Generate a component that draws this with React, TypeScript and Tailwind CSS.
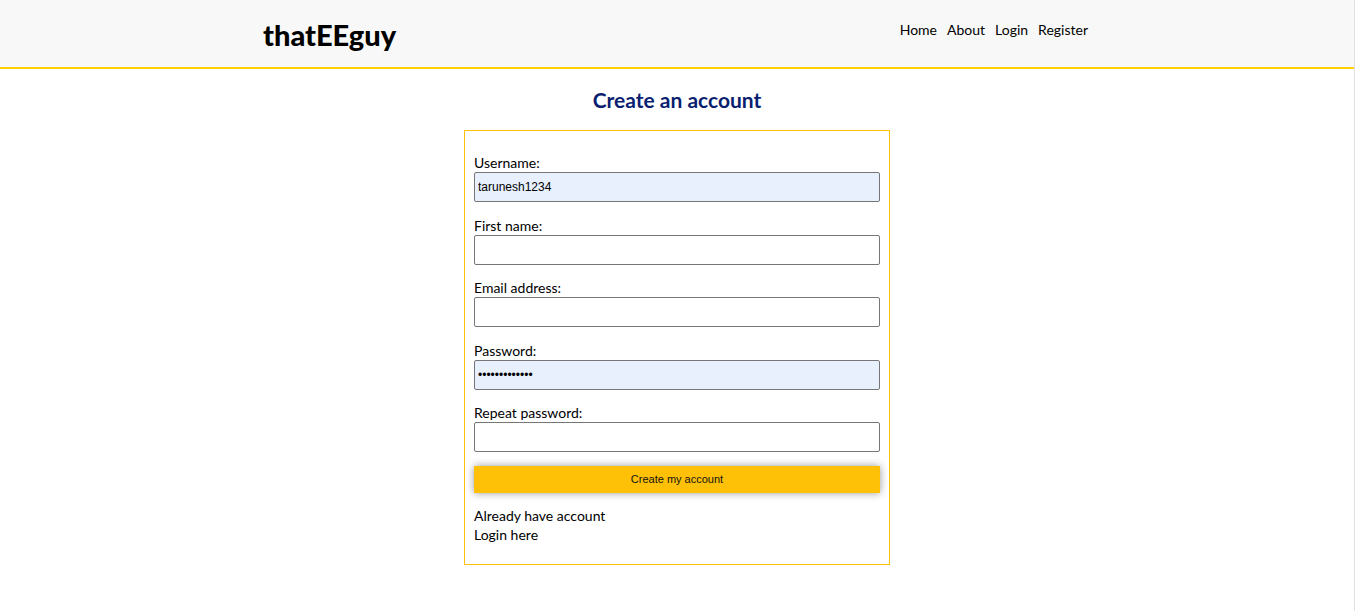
import React from "react";

const sans = "font-['Lato','Noto_Sans',sans-serif]";

function Field({ label, value, type = "text", filled = false }: { label: string; value?: string; type?: string; filled?: boolean }) {
  return (
    <div className="mb-[13.5px] flex flex-col">
      <label className="text-[14px] leading-[19px] text-black">{label}</label>
      <input
        type={type}
        defaultValue={value}
        readOnly
        className={`h-[30px] w-full border border-[#767676] rounded-[2px] px-[3px] font-['Liberation_Sans',Arial,sans-serif] text-[12px] text-black outline-none ${filled ? "bg-[#e8f0fe]" : "bg-white"}`}
      />
    </div>
  );
}

export default function App() {
  return (
    <div className={`${sans} min-h-[611px] bg-white border-r border-[#e0e0e0]`}>
      <header className="h-[69px] bg-[#f8f8f8] border-b-2 border-[#ffd000]">
        <div className="mx-auto flex h-full w-[830px] items-center justify-between pl-[1px] pr-[4px]">
          <div className="text-[29px] font-black leading-none text-black pt-[1px]">thatEEguy</div>
          <nav className="flex gap-[10px] text-[14px] text-black -mt-[9px]">
            <a>Home</a>
            <a>About</a>
            <a>Login</a>
            <a>Register</a>
          </nav>
        </div>
      </header>
      <main className="flex flex-col items-center">
        <h1 className="mt-[17px] text-[21px] font-bold leading-[28px] text-[#0b1f70]">Create an account</h1>
        <div className="mt-[16px] w-[426px] border border-[#ffc107] px-[9px] pt-[22px] pb-[20px]">
          <Field label="Username:" value="tarunesh1234" filled />
          <Field label="First name:" />
          <Field label="Email address:" />
          <Field label="Password:" value="passwordpassw" type="password" filled />
          <Field label="Repeat password:" />
          <button className="block h-[27px] w-full bg-[#ffc107] font-['Liberation_Sans',Arial,sans-serif] text-[11px] text-[#111] shadow-[0_0_8px_rgba(0,0,0,0.4)]">
            Create my account
          </button>
          <div className="mt-[13px] text-[14px] leading-[19px] text-black">
            <div>Already have account</div>
            <div>Login here</div>
          </div>
        </div>
      </main>
    </div>
  );
}
